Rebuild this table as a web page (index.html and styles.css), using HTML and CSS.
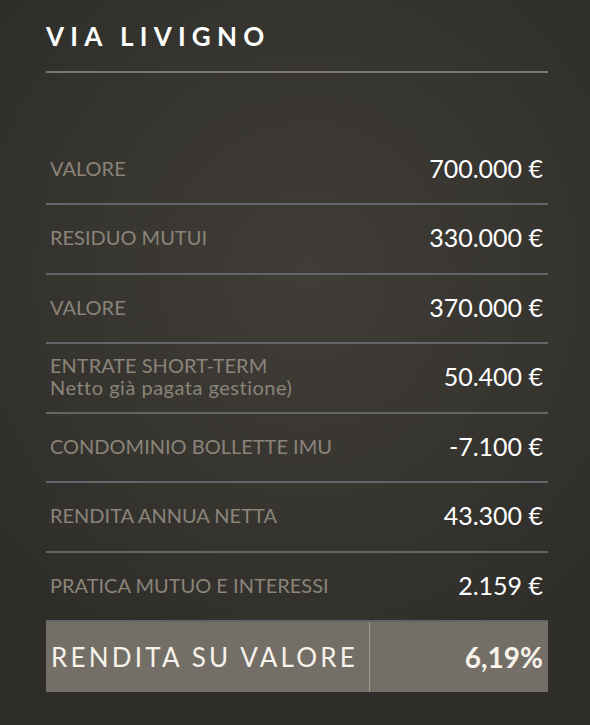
FILE: index.html
```html
<!DOCTYPE html>
<html lang="it">
<head>
<meta charset="utf-8">
<title>Via Livigno</title>
<link rel="stylesheet" href="styles.css">
</head>
<body>
<main class="card">
  <h1 class="title">VIA LIVIGNO</h1>
  <div class="table">
    <div class="row"><span class="label">VALORE</span><span class="value">700.000 €</span></div>
    <div class="row"><span class="label">RESIDUO MUTUI</span><span class="value">330.000 €</span></div>
    <div class="row"><span class="label">VALORE</span><span class="value">370.000 €</span></div>
    <div class="row"><span class="label">ENTRATE SHORT-TERM<br><span class="sub">Netto già pagata gestione)</span></span><span class="value">50.400 €</span></div>
    <div class="row"><span class="label">CONDOMINIO BOLLETTE IMU</span><span class="value">-7.100 €</span></div>
    <div class="row"><span class="label">RENDITA ANNUA NETTA</span><span class="value">43.300 €</span></div>
    <div class="row"><span class="label">PRATICA MUTUO E INTERESSI</span><span class="value">2.159 €</span></div>
    <div class="total">
      <span class="total-label">RENDITA SU VALORE</span>
      <span class="total-value">6,19%</span>
    </div>
  </div>
</main>
</body>
</html>
```

FILE: styles.css
```css
html, body {
  margin: 0;
  padding: 0;
  height: 100%;
}
body {
  background: radial-gradient(ellipse 70% 60% at 52% 38%, #403d38 0%, #36342f 60%, #2f2d29 100%);
  font-family: Lato, "Noto Sans", sans-serif;
  color: #fff;
}
.card {
  width: 502px;
  margin-left: 46px;
  padding-top: 23px;
}
.title {
  margin: 0;
  font-size: 26px;
  line-height: 26px;
  font-weight: 700;
  letter-spacing: 6.2px;
  color: #fff;
  padding-bottom: 22px;
  border-bottom: 2px solid #7b7771;
}
.table {
  margin-top: 62.5px;
}
.row {
  height: 64.5px;
  box-sizing: content-box;
  border-bottom: 2px solid #63656a;
  display: flex;
  align-items: center;
  justify-content: space-between;
  padding: 0 5px 3px 4px;
}
.label {
  font-size: 20px;
  line-height: 22px;
  color: #8a8479;
}
.sub {
  font-size: 20px;
  letter-spacing: 0.5px;
}
.value {
  font-size: 25px;
  color: #fff;
}
.total {
  height: 70px;
  background: #736f66;
  display: grid;
  grid-template-columns: 324px 1fr;
}
.total-label {
  display: flex;
  align-items: center;
  padding-left: 5px;
  font-size: 26px;
  letter-spacing: 3.2px;
  color: #f7f2ea;
  border-right: 1px solid #a39e94;
}
.total-value {
  display: flex;
  align-items: center;
  justify-content: flex-end;
  padding-right: 5px;
  font-size: 28px;
  font-weight: 700;
  color: #f7f2ea;
}
```
